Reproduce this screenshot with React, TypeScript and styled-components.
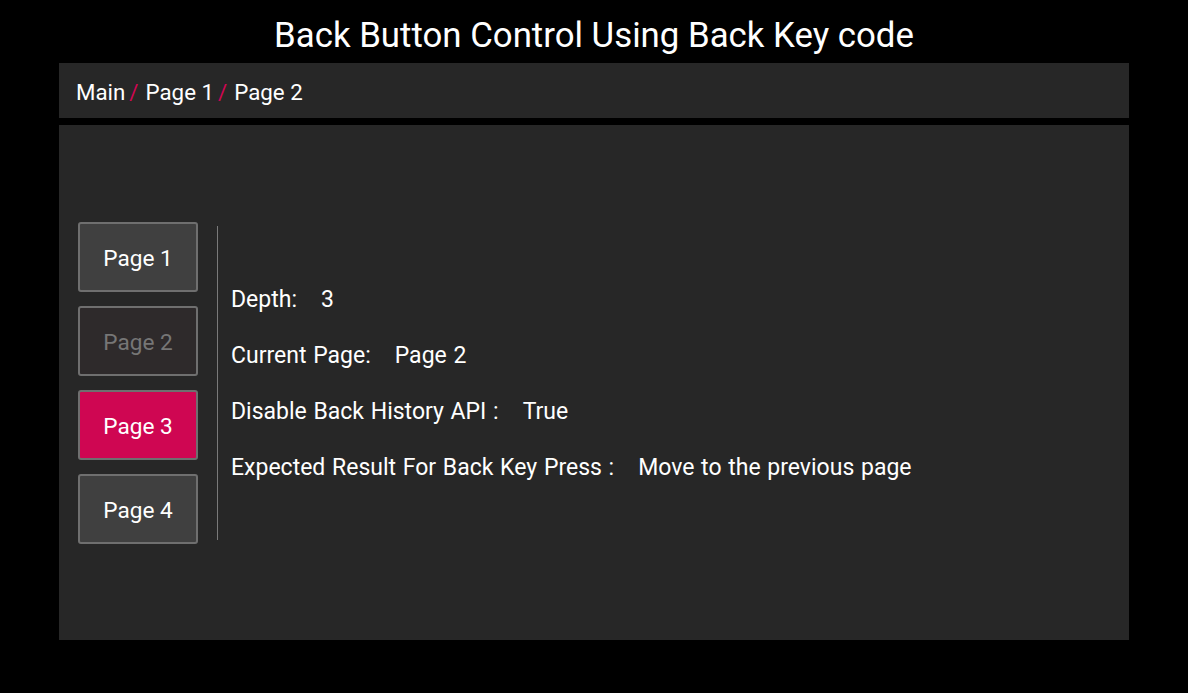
import React from "react";
import styled, { createGlobalStyle } from "styled-components";

const Global = createGlobalStyle`
  html, body { margin: 0; padding: 0; background: #000; }
  body { font-family: Roboto, "Liberation Sans", sans-serif; color: #fff; }
`;

const Page = styled.div`
  width: 1188px;
  height: 693px;
  background: #000;
  display: flex;
  flex-direction: column;
  align-items: center;
`;

const Title = styled.h1`
  margin: 0;
  height: 63px;
  display: flex;
  align-items: center;
  justify-content: center;
  font-size: 34.8px;
  font-weight: 400;
  color: #fff;
  padding-top: 6px;
  box-sizing: border-box;
`;

const Breadcrumb = styled.div`
  width: 1070px;
  height: 55px;
  background: #272727;
  display: flex;
  align-items: center;
  padding-left: 17px;
  padding-top: 2px;
  box-sizing: border-box;
  font-size: 22.3px;
`;

const Slash = styled.span`
  color: #cf0652;
  margin: 0 7px 0 4px;
`;

const Main = styled.div`
  margin-top: 7px;
  width: 1070px;
  height: 515px;
  background: #272727;
  display: flex;
  align-items: center;
  padding-left: 19px;
  box-sizing: border-box;
`;

const ButtonCol = styled.div`
  display: flex;
  flex-direction: column;
  gap: 14px;
`;

const PageButton = styled.div<{ $variant: "normal" | "disabled" | "active" }>`
  width: 120px;
  height: 70px;
  box-sizing: border-box;
  border: 2px solid #6f6f6f;
  border-radius: 3px;
  display: flex;
  align-items: center;
  justify-content: center;
  padding-top: 3px;
  font-size: 22.6px;
  background: ${(p) =>
    p.$variant === "active" ? "#cf0652" : p.$variant === "disabled" ? "#2e2a2b" : "#404040"};
  color: ${(p) => (p.$variant === "disabled" ? "#767676" : "#fff")};
`;

const Divider = styled.div`
  width: 1px;
  height: 314px;
  background: #7a7a7a;
  margin-left: 19px;
  margin-right: 13px;
`;

const Info = styled.div`
  display: flex;
  flex-direction: column;
`;

const Row = styled.div`
  height: 56px;
  display: flex;
  align-items: center;
  padding-top: 2px;
  box-sizing: border-box;
  font-size: 23px;
  word-spacing: 1px;
`;

const Value = styled.span`
  margin-left: 24px;
`;

export default function App() {
  return (
    <>
      <Global />
      <Page>
        <Title>Back Button Control Using Back Key code</Title>
        <Breadcrumb>
          Main<Slash>/</Slash>Page 1<Slash>/</Slash>Page 2
        </Breadcrumb>
        <Main>
          <ButtonCol>
            <PageButton $variant="normal">Page 1</PageButton>
            <PageButton $variant="disabled">Page 2</PageButton>
            <PageButton $variant="active">Page 3</PageButton>
            <PageButton $variant="normal">Page 4</PageButton>
          </ButtonCol>
          <Divider />
          <Info>
            <Row>
              Depth:<Value>3</Value>
            </Row>
            <Row>
              Current Page:<Value>Page 2</Value>
            </Row>
            <Row>
              Disable Back History API :<Value>True</Value>
            </Row>
            <Row>
              Expected Result For Back Key Press :<Value>Move to the previous page</Value>
            </Row>
          </Info>
        </Main>
      </Page>
    </>
  );
}
